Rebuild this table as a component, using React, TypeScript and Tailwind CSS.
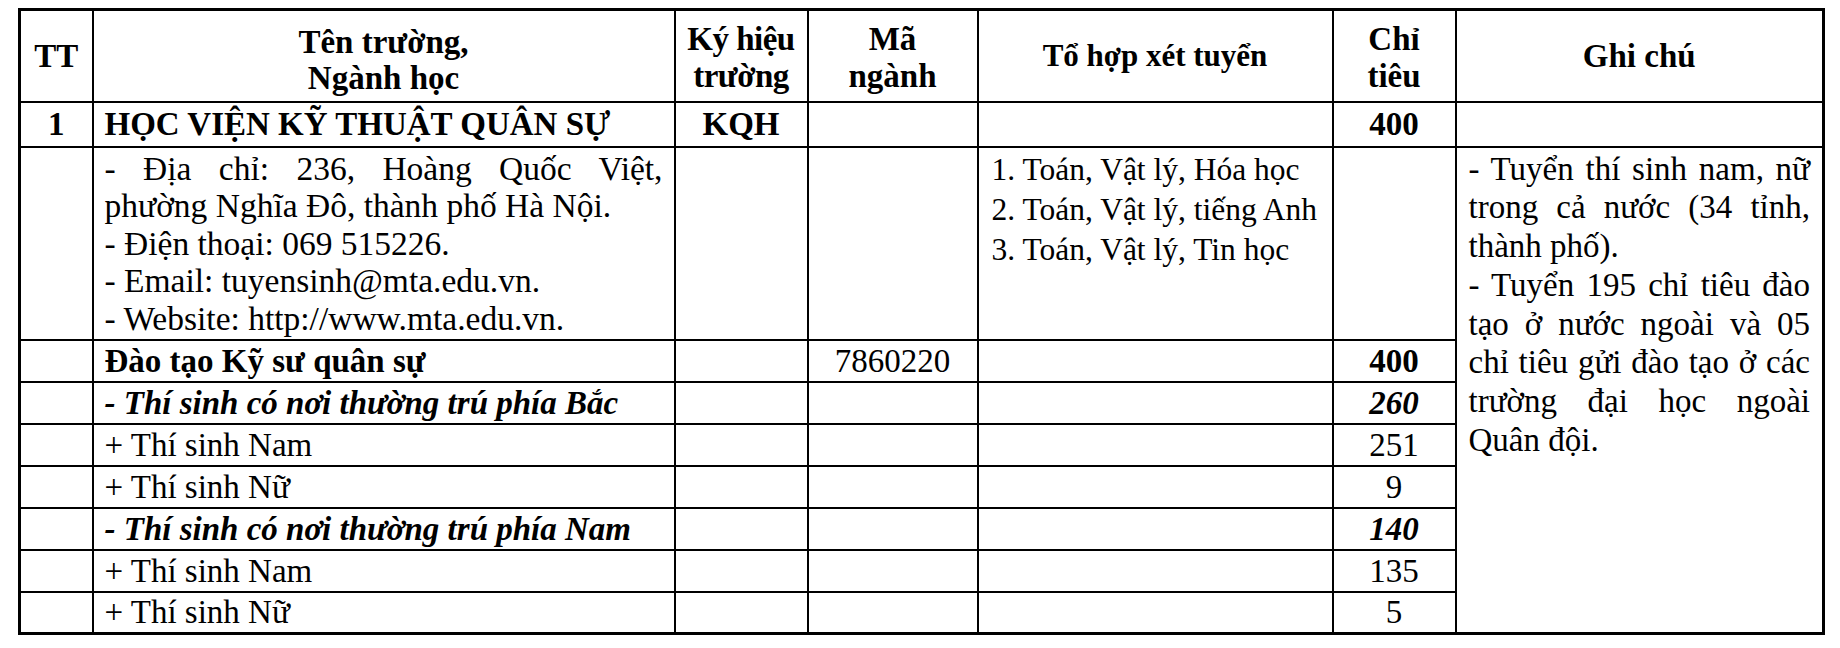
const cell = "border-2 border-black p-0";

type Row = {
  name: string;
  nameStyle: string;
  code?: string;
  quota: string;
  quotaStyle: string;
};

const rows: Row[] = [
  { name: "Đào tạo Kỹ sư quân sự", nameStyle: "font-bold", code: "7860220", quota: "400", quotaStyle: "font-bold" },
  { name: "- Thí sinh có nơi thường trú phía Bắc", nameStyle: "font-bold italic", quota: "260", quotaStyle: "font-bold italic" },
  { name: "+ Thí sinh Nam", nameStyle: "", quota: "251", quotaStyle: "" },
  { name: "+ Thí sinh Nữ", nameStyle: "", quota: "9", quotaStyle: "" },
  { name: "- Thí sinh có nơi thường trú phía Nam", nameStyle: "font-bold italic", quota: "140", quotaStyle: "font-bold italic" },
  { name: "+ Thí sinh Nam", nameStyle: "", quota: "135", quotaStyle: "" },
  { name: "+ Thí sinh Nữ", nameStyle: "", quota: "5", quotaStyle: "" },
];

// each note line; true = stretched to the full width
const notes: [string, boolean][] = [
  ["- Tuyển thí sinh nam, nữ", true],
  ["trong cả nước (34 tỉnh,", true],
  ["thành phố).", false],
  ["- Tuyển 195 chỉ tiêu đào", true],
  ["tạo ở nước ngoài và 05", true],
  ["chỉ tiêu gửi đào tạo ở các", true],
  ["trường đại học ngoài", true],
  ["Quân đội.", false],
];

function Line({ text, full }: { text: string; full?: boolean }) {
  return (
    <div className={full ? "whitespace-nowrap text-justify [text-align-last:justify]" : "whitespace-nowrap"}>
      {text}
    </div>
  );
}

export default function App() {
  return (
    <div className="min-h-[648px] bg-white pl-[18px] pt-[8px] font-['Liberation_Serif','Times_New_Roman',serif] text-[33px] leading-[38px] text-black">
      <table className="w-[1804px] table-fixed border-collapse border-[3px] border-black">
        <colgroup>
          <col className="w-[73px]" />
          <col className="w-[582px]" />
          <col className="w-[133px]" />
          <col className="w-[170px]" />
          <col className="w-[355px]" />
          <col className="w-[123px]" />
          <col className="w-[368px]" />
        </colgroup>
        <thead>
          <tr className="h-[92px] text-center font-bold">
            <th className={cell}>TT</th>
            <th className={`${cell} pt-[8px] leading-[36px]`}>
              Tên trường,
              <br />
              Ngành học
            </th>
            <th className={`${cell} whitespace-nowrap pt-[4px] leading-[37px] tracking-[-0.5px]`}>
              Ký hiệu
              <br />
              trường
            </th>
            <th className={`${cell} pt-[4px] leading-[37px]`}>
              Mã
              <br />
              ngành
            </th>
            <th className={`${cell} text-[31px]`}>Tổ hợp xét tuyển</th>
            <th className={`${cell} pt-[4px] leading-[37px]`}>
              Chỉ
              <br />
              tiêu
            </th>
            <th className={cell}>Ghi chú</th>
          </tr>
        </thead>
        <tbody>
          <tr className="h-[45px] font-bold">
            <td className={`${cell} text-center`}>1</td>
            <td className={`${cell} whitespace-nowrap px-[11px]`}>HỌC VIỆN KỸ THUẬT QUÂN SỰ</td>
            <td className={`${cell} text-center`}>KQH</td>
            <td className={cell}></td>
            <td className={cell}></td>
            <td className={`${cell} text-center`}>400</td>
            <td className={cell}></td>
          </tr>
          <tr className="h-[193px] align-top">
            <td className={cell}></td>
            <td className={`${cell} px-[11px] pt-[2px] text-[33.5px] leading-[37.5px]`}>
              <Line text="- Địa chỉ: 236, Hoàng Quốc Việt," full />
              <Line text="phường Nghĩa Đô, thành phố Hà Nội." />
              <Line text="- Điện thoại: 069 515226." />
              <Line text="- Email: tuyensinh@mta.edu.vn." />
              <Line text="- Website: http://www.mta.edu.vn." />
            </td>
            <td className={cell}></td>
            <td className={cell}></td>
            <td className={`${cell} px-[13px] pt-[2px] text-[31.5px] leading-[40px]`}>
              <Line text="1. Toán, Vật lý, Hóa học" />
              <Line text="2. Toán, Vật lý, tiếng Anh" />
              <Line text="3. Toán, Vật lý, Tin học" />
            </td>
            <td className={cell}></td>
            <td rowSpan={8} className={`${cell} px-[12px] pt-[2px] leading-[38.8px]`}>
              {notes.map(([text, full], i) => (
                <Line key={i} text={text} full={full} />
              ))}
            </td>
          </tr>
          {rows.map((r, i) => (
            <tr key={i} className="h-[42px]">
              <td className={cell}></td>
              <td className={`${cell} whitespace-nowrap px-[11px] ${r.nameStyle}`}>{r.name}</td>
              <td className={cell}></td>
              <td className={`${cell} text-center`}>{r.code}</td>
              <td className={cell}></td>
              <td className={`${cell} text-center ${r.quotaStyle}`}>{r.quota}</td>
            </tr>
          ))}
        </tbody>
      </table>
    </div>
  );
}
